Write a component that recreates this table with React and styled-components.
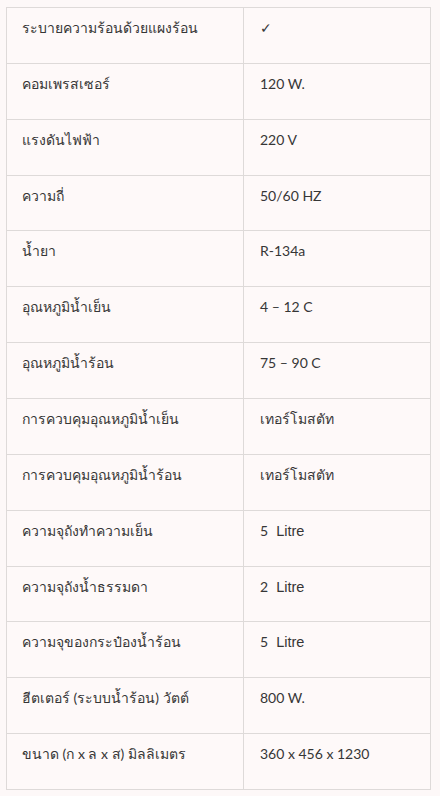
import styled, { createGlobalStyle } from "styled-components";

const rows = [
  ["ระบายความร้อนด้วยแผงร้อน", "✓"],
  ["คอมเพรสเซอร์", "120 W."],
  ["แรงดันไฟฟ้า", "220 V"],
  ["ความถี่", "50/60 HZ"],
  ["น้ำยา", "R-134a"],
  ["อุณหภูมิน้ำเย็น", "4 – 12 C"],
  ["อุณหภูมิน้ำร้อน", "75 – 90 C"],
  ["การควบคุมอุณหภูมิน้ำเย็น", "เทอร์โมสตัท"],
  ["การควบคุมอุณหภูมิน้ำร้อน", "เทอร์โมสตัท"],
  ["ความจุถังทำความเย็น", "5", "Litre"],
  ["ความจุถังน้ำธรรมดา", "2", "Litre"],
  ["ความจุของกระป๋องน้ำร้อน", "5", "Litre"],
  ["ฮีตเตอร์ (ระบบน้ำร้อน) วัตต์", "800 W."],
  ["ขนาด (ก x ล x ส) มิลลิเมตร", "360 x 456 x 1230"],
];

const GlobalStyle = createGlobalStyle`
  html, body {
    margin: 0;
    background: #fdf8f8;
  }
  body {
    font-family: Lato, "Noto Sans", sans-serif;
    color: #363636;
  }
`;

function App() {
  return (
    <>
      <GlobalStyle/>
      <Page>
        <SpecTable>
          <colgroup>
            <col style={{width: 237}}/>
            <col/>
          </colgroup>
          <tbody>
            {rows.map(([label, value, unit]) => (
              <tr key={label}>
                <Cell $label>{label}</Cell>
                <Cell>
                  {value}
                  {unit && <Unit>{"\u00a0\u00a0"}{unit}</Unit>}
                </Cell>
              </tr>
            ))}
          </tbody>
        </SpecTable>
      </Page>
    </>
  );
}

const Page = styled.main`
  padding: 7px 9px 0 6px;
`

const SpecTable = styled.table`
  width: 425px;
  table-layout: fixed;
  border-collapse: collapse;
  background: #fef9f9;
`

const Cell = styled.td`
  vertical-align: top;
  padding: 8px ${p => p.$label ? "15px" : "16px"} 22.86px;
  border: 1px solid #dedad9;
  font-size: 14px;
  line-height: 24px;
  white-space: nowrap;
`

const Unit = styled.span`
  font-family: "Liberation Sans", Arial, sans-serif;
  font-size: 14.5px;
`

export default App;
